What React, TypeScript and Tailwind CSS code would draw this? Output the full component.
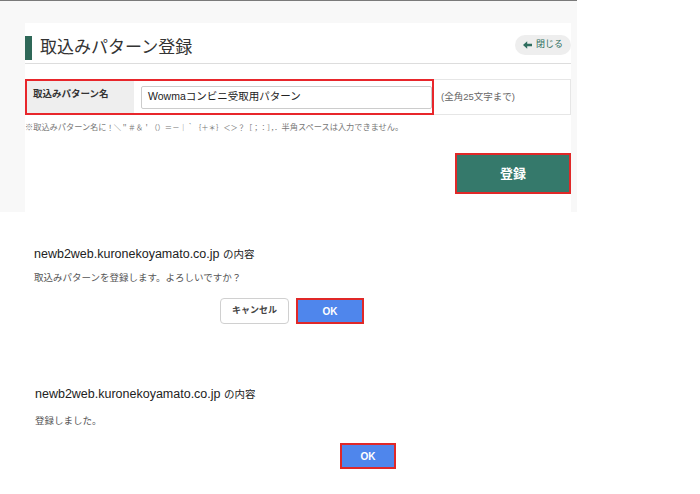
import React from 'react';

const font = "font-['Liberation_Sans','Noto_Sans_CJK_JP',sans-serif]";

function BackArrow() {
    return (
        <svg width="9" height="8" viewBox="0 0 9 8" className="shrink-0">
            <path d="M0 4 L4.2 0.3 L4.2 2.7 L9 2.7 L9 5.3 L4.2 5.3 L4.2 7.7 Z" fill="#2f6e5f" />
        </svg>
    );
}

function DialogTitle() {
    return (
        <div className="text-[12.5px] leading-[16px] text-[#222222]">
            newb2web.kuronekoyamato.co.jp <span className="text-[10.5px]">の内容</span>
        </div>
    );
}

function RegisterPanel() {
    return (
        <div className="w-[577px] h-[212px] bg-[#f8f8f8] border-t border-[#7a7a7a] pl-[25px] pt-[22px] flex">
            <div className="w-[546px] h-full bg-white flex flex-col">
                {/* Heading */}
                <div className="h-[41px] border-b border-[#dddddd] flex items-start justify-between">
                    <div className="flex items-center gap-[8px] mt-[13px]">
                        <div className="w-[7px] h-[24px] bg-[#2f6858]" />
                        <span className="text-[17px] leading-[24px] text-[#333333]">取込みパターン登録</span>
                    </div>
                    <button className="mt-[12px] w-[56px] h-[20px] rounded-full bg-[#eeeeee] flex items-center justify-center gap-[4px] text-[9px] text-[#2f6e5f]">
                        <BackArrow />
                        閉じる
                    </button>
                </div>

                {/* Form row */}
                <div className="mt-[15px] h-[36px] flex">
                    <div className="w-[409px] h-full border-2 border-[#e8262b] flex">
                        <div className="w-[107px] h-full bg-[#eeeeee] pl-[6px] pt-[6px] text-[9.5px] font-bold text-[#333333] leading-[14px]">
                            取込みパターン名
                        </div>
                        <div className="flex items-center pl-[7px]">
                            <div className="w-[291px] h-[23px] border border-[#cccccc] rounded-[2px] bg-white flex items-center pl-[6px] text-[10.5px] text-[#222222]">
                                Wowmaコンビニ受取用パターン
                            </div>
                        </div>
                    </div>
                    <div className="flex-1 h-full border-y border-r border-[#e6e6e6] flex items-center pl-[7px] text-[9.5px] text-[#666666]">
                        (全角25文字まで)
                    </div>
                </div>

                <p className="mt-[6px] text-[8.2px] leading-[14px] text-[#777777] whitespace-nowrap">
                    ※取込みパターン名に
                    <span className="text-[7.3px]">！＼＂＃＆＇（）＝－｜｀｛＋＊｝＜＞？［；：］，．</span>
                    半角スペースは入力できません。
                </p>

                <div className="flex justify-end mt-[18px]">
                    <button className="w-[116px] h-[41px] bg-[#35796b] border-2 border-[#e02828] text-white text-[13px] font-bold">
                        登録
                    </button>
                </div>
            </div>
        </div>
    );
}

export default function App() {
    return (
        <div className={`w-[700px] h-[494px] bg-white overflow-hidden ${font}`}>
            <RegisterPanel />

            {/* Confirm dialog */}
            <div className="pl-[34px] pt-[34px]">
                <DialogTitle />
                <div className="mt-[10px] text-[9.5px] leading-[12px] text-[#555555]">
                    取込みパターンを登録します。よろしいですか？
                </div>
                <div className="mt-[14px] ml-[186px] flex gap-[7px]">
                    <button className="w-[69px] h-[26px] rounded-[4px] border border-[#d0d0d0] bg-white text-[9px] font-bold text-[#444444]">
                        キャンセル
                    </button>
                    <button className="w-[68px] h-[26px] bg-[#4f86ec] border-2 border-[#e02828] text-[10px] font-bold text-white">
                        OK
                    </button>
                </div>
            </div>

            {/* Done dialog */}
            <div className="pl-[35px] mt-[62px]">
                <DialogTitle />
                <div className="mt-[13px] text-[9.5px] leading-[12px] text-[#555555]">登録しました。</div>
                <div className="mt-[16px] ml-[305px] flex">
                    <button className="w-[56px] h-[26px] bg-[#4f86ec] border-2 border-[#e02828] text-[10px] font-bold text-white">
                        OK
                    </button>
                </div>
            </div>
        </div>
    );
}
